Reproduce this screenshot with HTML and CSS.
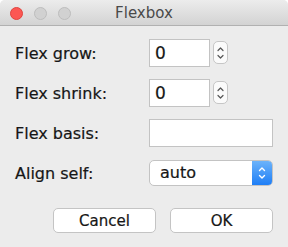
FILE: index.html
```html
<!DOCTYPE html>
<html>
<head>
<meta charset="utf-8">
<link rel="stylesheet" href="styles.css">
</head>
<body>
<div class="window">
  <div class="titlebar">
    <div class="lights">
      <span class="light red"></span>
      <span class="light"></span>
      <span class="light"></span>
    </div>
    <div class="title">Flexbox</div>
  </div>
  <div class="form">
    <label class="label">Flex grow:</label>
    <div class="control">
      <div class="input num">0</div>
      <div class="stepper">
        <svg width="9" height="18" viewBox="0 0 9 18"><path d="M2 6.5 L4.5 4 L7 6.5 M2 11.5 L4.5 14 L7 11.5" fill="none" stroke="#555" stroke-width="1.2" stroke-linecap="round" stroke-linejoin="round"/></svg>
      </div>
    </div>
    <label class="label">Flex shrink:</label>
    <div class="control">
      <div class="input num">0</div>
      <div class="stepper">
        <svg width="9" height="18" viewBox="0 0 9 18"><path d="M2 6.5 L4.5 4 L7 6.5 M2 11.5 L4.5 14 L7 11.5" fill="none" stroke="#555" stroke-width="1.2" stroke-linecap="round" stroke-linejoin="round"/></svg>
      </div>
    </div>
    <label class="label">Flex basis:</label>
    <div class="control">
      <div class="input wide"></div>
    </div>
    <label class="label">Align self:</label>
    <div class="control">
      <div class="select">
        <span class="select-value">auto</span>
        <span class="select-arrow">
          <svg width="10" height="18" viewBox="0 0 10 18"><path d="M2.5 6.5 L5 4 L7.5 6.5 M2.5 11.5 L5 14 L7.5 11.5" fill="none" stroke="#fff" stroke-width="1.4" stroke-linecap="round" stroke-linejoin="round"/></svg>
        </span>
      </div>
    </div>
  </div>
  <div class="buttons">
    <button class="btn">Cancel</button>
    <button class="btn">OK</button>
  </div>
  <div class="grip">
    <svg width="8" height="8" viewBox="0 0 8 8"><path d="M7 2 L2 7 M7 5 L5 7" stroke="#aaa" stroke-width="0.8"/></svg>
  </div>
</div>
</body>
</html>
```
FILE: styles.css
```css
html, body {
  margin: 0;
  padding: 0;
}
body {
  width: 288px;
  height: 247px;
  overflow: hidden;
  font-family: "DejaVu Sans", "Liberation Sans", sans-serif;
  color: #161616;
}
.window {
  position: relative;
  width: 288px;
  height: 247px;
  background: #ececec;
  border-radius: 5px 5px 0 0;
  overflow: hidden;
}
.titlebar {
  position: relative;
  height: 25px;
  background: linear-gradient(#ececec, #d3d3d3);
  border-bottom: 1px solid #b1b1b1;
  display: flex;
  align-items: center;
  justify-content: center;
}
.lights {
  position: absolute;
  left: 10px;
  top: 7px;
  display: flex;
  gap: 11px;
}
.light {
  width: 13px;
  height: 13px;
  border-radius: 50%;
  background: #d1d1d1;
  border: 0.5px solid #bdbdbd;
  box-sizing: border-box;
}
.light.red {
  background: #fc5753;
  border-color: #e0443e;
}
.title {
  font-size: 15px;
  color: #4a4a4a;
  padding-top: 1px;
}
.form {
  display: grid;
  grid-template-columns: 134px 1fr;
  grid-auto-rows: 27px;
  row-gap: 13px;
  padding: 13px 15px 0 15px;
}
.label {
  display: flex;
  align-items: center;
  font-size: 16px;
  padding-top: 1px;
  -webkit-text-stroke: 0.2px #161616;
}
.control {
  display: flex;
  align-items: center;
  gap: 3px;
}
.input {
  box-sizing: border-box;
  height: 28px;
  background: #fff;
  border: 1px solid #c3c3c3;
  font-size: 17px;
  display: flex;
  align-items: center;
  padding-left: 5px;
  -webkit-text-stroke: 0.2px #161616;
}
.num {
  width: 61px;
}
.wide {
  width: 124px;
}
.stepper {
  box-sizing: border-box;
  width: 15px;
  height: 23px;
  border: 1px solid #c6c6c6;
  border-radius: 5px;
  background: #fbfbfb;
  display: flex;
  align-items: center;
  justify-content: center;
}
.select {
  box-sizing: border-box;
  width: 124px;
  height: 26px;
  display: flex;
  border: 1px solid #c3c3c3;
  border-radius: 5px;
  background: #fff;
  overflow: hidden;
}
.select-value {
  flex: 1;
  font-size: 16px;
  display: flex;
  align-items: center;
  padding-left: 10px;
  -webkit-text-stroke: 0.2px #161616;
}
.select-arrow {
  width: 20px;
  background: linear-gradient(#6cb3fa, #1e7ef6);
  display: flex;
  align-items: center;
  justify-content: center;
}
.buttons {
  display: flex;
  justify-content: flex-end;
  gap: 14px;
  padding: 22px 15px 0 0;
}
.btn {
  box-sizing: border-box;
  width: 103px;
  height: 25px;
  background: #fff;
  border: 1px solid #c4c4c4;
  border-radius: 5px;
  font-family: "DejaVu Sans", "Liberation Sans", sans-serif;
  font-size: 15px;
  color: #161616;
  padding: 0;
  -webkit-text-stroke: 0.2px #161616;
}
.grip {
  position: absolute;
  right: 1px;
  bottom: 1px;
  width: 8px;
  height: 8px;
}
```
